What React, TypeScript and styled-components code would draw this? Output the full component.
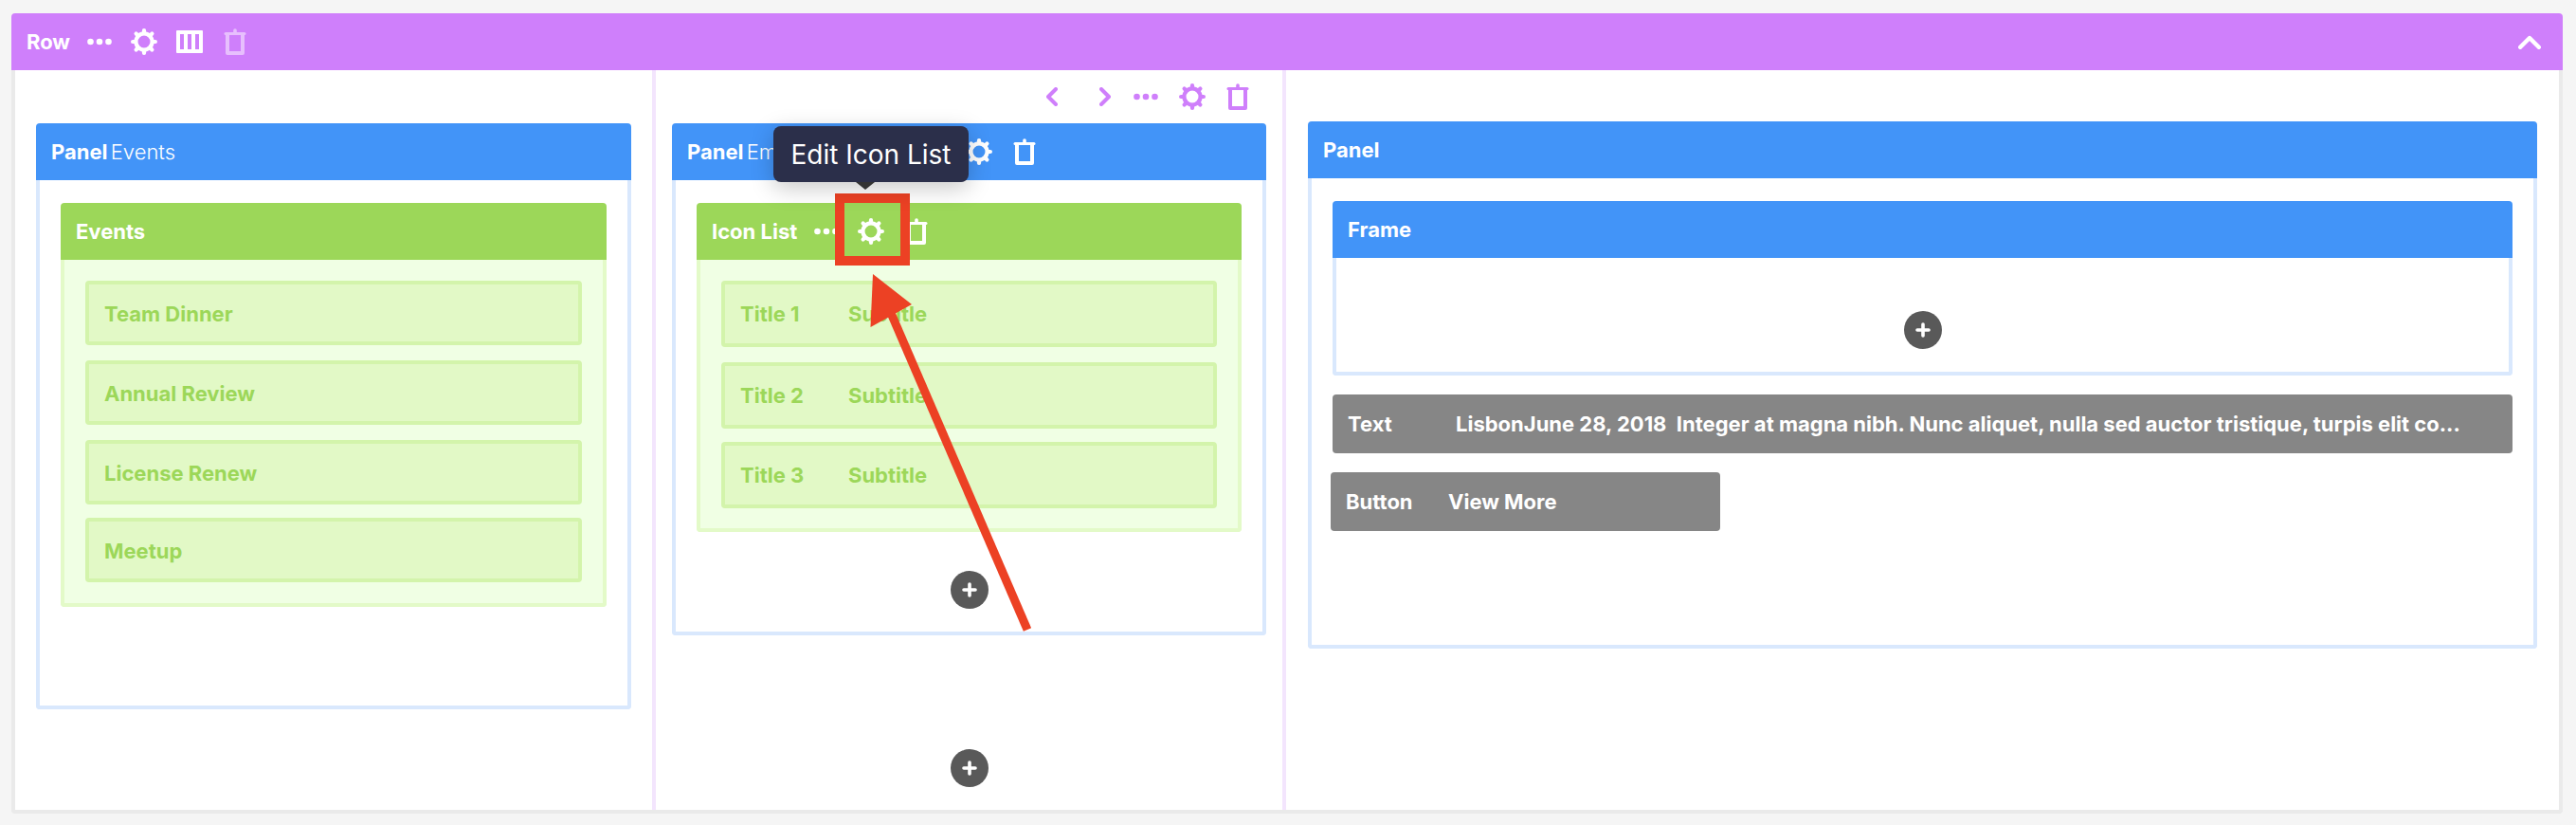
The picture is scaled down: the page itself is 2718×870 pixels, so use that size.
import React from "react";
import styled, { createGlobalStyle } from "styled-components";

const GlobalStyle = createGlobalStyle`
  html, body {
    margin: 0;
    padding: 0;
    background: #f5f5f5;
    font-family: Inter, "Liberation Sans", sans-serif;
  }
  * { box-sizing: border-box; }
`;

const PURPLE = "#cf7ffb";
const BLUE = "#4294f8";
const GREEN = "#9cd759";
const GRAY = "#868686";

// ---- page and row

const Page = styled.div`
  position: relative;
  width: 2718px;
  height: 870px;
  padding: 14px 14px 12px 12px;
  overflow: hidden;
`;

const Row = styled.section`
  display: flex;
  flex-direction: column;
  height: 844px;
`;

const RowBar = styled.header`
  display: flex;
  align-items: center;
  flex: 0 0 60px;
  gap: 20px;
  padding: 0 23px 0 16px;
  background: ${PURPLE};
  color: #fff;
  border-radius: 4px 4px 0 0;
`;

const RowBody = styled.div`
  flex: 1;
  display: flex;
  min-height: 0;
  background: #fff;
  border: 4px solid #eaeaea;
  border-top: 0;
  border-radius: 0 0 4px 4px;
`;

const Column = styled.div<{ $width?: number; $top: number; $side: string }>`
  position: relative;
  display: flex;
  flex-direction: column;
  align-items: stretch;
  ${(p) => (p.$width ? `flex: 0 0 ${p.$width}px;` : "flex: 1; min-width: 0;")}
  padding: ${(p) => p.$top}px ${(p) => p.$side};
  padding-bottom: 0;
  ${(p) => (p.$width ? "border-right: 4px solid #f3e5fd;" : "")}
`;

const ColumnControls = styled.div`
  display: flex;
  align-items: center;
  justify-content: flex-end;
  height: 28px;
  margin-bottom: 14px;
  padding-right: 18px;
  gap: 22px;
  color: ${PURPLE};
`;

// ---- panels and nested blocks

const Block = styled.div<{ $height?: number }>`
  display: flex;
  flex-direction: column;
  ${(p) => (p.$height ? `height: ${p.$height}px;` : "")}
`;

const BlockHeader = styled.div<{ $tone: string }>`
  display: flex;
  align-items: center;
  flex: 0 0 60px;
  gap: 20px;
  padding: 0 0 0 16px;
  background: ${(p) => p.$tone};
  color: #fff;
  border-radius: 4px 4px 0 0;
`;

const BlockBody = styled.div<{ $frame: string; $fill?: string; $pad: string }>`
  flex: 1;
  display: flex;
  flex-direction: column;
  padding: ${(p) => p.$pad};
  background: ${(p) => p.$fill || "#fff"};
  border: 4px solid ${(p) => p.$frame};
  border-top: 0;
  border-radius: 0 0 4px 4px;
`;

const Title = styled.span`
  font-size: 22px;
  font-weight: 700;
  line-height: 1;
  white-space: nowrap;
`;

const TitleNote = styled.span`
  margin-left: -2px;
  font-weight: 300;
`;

const WideTitle = styled(Title)`
  width: 274px;
`;

const ListItem = styled.div<{ $height: number; $pull?: boolean; $drop?: number }>`
  display: flex;
  align-items: center;
  height: ${(p) => p.$height}px;
  margin-top: ${(p) => (p.$pull ? 14 : 16)}px;
  padding-left: 16px;
  padding-top: ${(p) => p.$drop || 0}px;
  background: #e2f9c6;
  border: 4px solid #d3f4ab;
  border-radius: 4px;
  color: ${GREEN};
  font-size: 22px;
  font-weight: 700;
  &:first-child { margin-top: 0; }
`;

const ItemTitle = styled.span`
  width: 114px;
`;

const GrayBar = styled.div<{ $shift?: number; $width?: number }>`
  display: flex;
  align-items: center;
  height: 62px;
  margin-top: 20px;
  margin-left: ${(p) => p.$shift || 0}px;
  padding-left: 16px;
  ${(p) => (p.$width ? `width: ${p.$width}px;` : "")}
  background: ${GRAY};
  border-radius: 4px;
  color: #fff;
  font-size: 22px;
  font-weight: 700;
  white-space: pre;
`;

const BarLabel = styled.span<{ $width: number }>`
  flex: 0 0 ${(p) => p.$width}px;
`;

const AddRow = styled.div<{ $top: number }>`
  display: flex;
  justify-content: center;
  margin-top: ${(p) => p.$top}px;
`;

const AddButton = styled.button`
  display: flex;
  align-items: center;
  justify-content: center;
  width: 40px;
  height: 40px;
  padding: 0;
  border: 0;
  border-radius: 50%;
  background: #595959;
  color: #fff;
`;

// ---- tooltip and the red annotation on top

const Tooltip = styled.div`
  position: absolute;
  left: 816px;
  top: 133px;
  width: 206px;
  height: 59px;
  display: flex;
  align-items: center;
  justify-content: center;
  background: #2b2f4a;
  border-radius: 8px;
  color: #fff;
  font-size: 28px;
  font-weight: 400;
  box-shadow: 0 6px 24px rgba(0, 0, 0, 0.22);
  &::after {
    content: "";
    position: absolute;
    left: 87px;
    top: 59px;
    border: 10px solid transparent;
    border-top: 8px solid #333;
    border-bottom: 0;
  }
`;

const Highlight = styled.div`
  position: absolute;
  left: 881px;
  top: 204px;
  width: 79px;
  height: 76px;
  border: 10px solid #ec4124;
`;

const ArrowLayer = styled.svg`
  position: absolute;
  left: 0;
  top: 0;
  pointer-events: none;
`;

// ---- icons

const DotsSvg = styled.svg<{ $shift: number }>`
  margin-left: ${(p) => p.$shift}px;
`;

const Dots = ({ shift = -2 }: { shift?: number }) => (
  <DotsSvg $shift={shift} width="26" height="8" viewBox="0 0 26 8" fill="currentColor">
    <circle cx="3.5" cy="4" r="3.3" />
    <circle cx="13" cy="4" r="3.3" />
    <circle cx="22.5" cy="4" r="3.3" />
  </DotsSvg>
);

const Gear = () => (
  <svg width="28" height="28" viewBox="0 0 28 28" fill="none" stroke="currentColor">
    <circle cx="14" cy="14" r="8.6" strokeWidth="4.2" />
    <g strokeWidth="4.2" strokeLinecap="round">
      <path d="M14 2.1v3" />
      <path d="M14 22.9v3" />
      <path d="M2.1 14h3" />
      <path d="M22.9 14h3" />
      <path d="M5.6 5.6l2 2" />
      <path d="M20.4 20.4l2 2" />
      <path d="M5.6 22.4l2-2" />
      <path d="M20.4 7.6l2-2" />
    </g>
  </svg>
);

const TrashSvg = styled.svg<{ $shift: number }>`
  margin-left: ${(p) => p.$shift}px;
`;

const Trash = ({ faded, shift = 2 }: { faded?: boolean; shift?: number }) => (
  <TrashSvg
    $shift={shift}
    width="24"
    height="28"
    viewBox="0 0 24 28"
    fill="none"
    stroke="currentColor"
    opacity={faded ? 0.5 : 1}
  >
    <path d="M4 6v20h16V6" strokeWidth="4" strokeLinejoin="round" />
    <path d="M2 5.5h20" strokeWidth="3" strokeLinecap="round" />
    <path d="M12 2v3" strokeWidth="3.6" strokeLinecap="round" />
  </TrashSvg>
);

const Columns = () => (
  <svg width="28" height="24" viewBox="0 0 28 24" fill="currentColor">
    <path
      fillRule="evenodd"
      d="M1 0h26a1 1 0 0 1 1 1v22a1 1 0 0 1-1 1H1a1 1 0 0 1-1-1V1a1 1 0 0 1 1-1zM4 4v16h4V4zM12 4v16h4V4zM20 4v16h4V4z"
    />
  </svg>
);

const Chevron = ({ dir }: { dir: "left" | "right" | "up" }) => {
  if (dir === "up") {
    return (
      <svg width="24" height="15" viewBox="0 0 24 15" fill="none" stroke="currentColor" strokeWidth="4.4" strokeLinecap="round" strokeLinejoin="round">
        <path d="M2.2 12.8L12 3l9.8 9.8" />
      </svg>
    );
  }
  return (
    <svg width="12" height="20" viewBox="0 0 12 20" fill="none" stroke="currentColor" strokeWidth="4" strokeLinecap="round" strokeLinejoin="round">
      <path d={dir === "left" ? "M10 2L2 10l8 8" : "M2 2l8 8-8 8"} />
    </svg>
  );
};

const Plus = () => (
  <svg width="16" height="16" viewBox="0 0 16 16" fill="none" stroke="currentColor" strokeWidth="3.6" strokeLinecap="round">
    <path d="M8 2v12" />
    <path d="M2 8h12" />
  </svg>
);

const Push = styled.span`
  margin-left: auto;
  display: flex;
`;

const events = ["Team Dinner", "Annual Review", "License Renew", "Meetup"];
const titles = ["Title 1", "Title 2", "Title 3"];

const App = () => {
  return (
    <Page>
      <GlobalStyle />
      <Row>
        <RowBar>
          <Title>Row</Title>
          <Dots />
          <Gear />
          <Columns />
          <Trash faded />
          <Push>
            <Chevron dir="up" />
          </Push>
        </RowBar>
        <RowBody>
          <Column $width={676} $top={56} $side="22px 0 22px">
            <Block $height={618}>
              <BlockHeader $tone={BLUE}>
                <Title>
                  Panel <TitleNote>Events</TitleNote>
                </Title>
              </BlockHeader>
              <BlockBody $frame="#d9e8fd" $pad="24px 22px 0">
                <Block>
                  <BlockHeader $tone={GREEN}>
                    <Title>Events</Title>
                  </BlockHeader>
                  <BlockBody $frame="#e3fac8" $fill="#f0ffe4" $pad="22px 22px 22px">
                    {events.map((name, i) => (
                      <ListItem key={name} $height={68} $drop={2} $pull={i === 3}>
                        {name}
                      </ListItem>
                    ))}
                  </BlockBody>
                </Block>
              </BlockBody>
            </Block>
          </Column>

          <Column $width={665} $top={14} $side="17px 0 17px">
            <ColumnControls>
              <Chevron dir="left" />
              <span />
              <Chevron dir="right" />
              <Dots shift={2} />
              <Gear />
              <Trash shift={0} />
            </ColumnControls>
            <Block $height={540}>
              <BlockHeader $tone={BLUE}>
                <WideTitle>
                  Panel <TitleNote>Empty</TitleNote>
                </WideTitle>
                <Gear />
                <Trash />
              </BlockHeader>
              <BlockBody $frame="#d9e8fd" $pad="24px 22px 0">
                <Block>
                  <BlockHeader $tone={GREEN}>
                    <Title>Icon List</Title>
                    <Dots />
                    <Gear />
                    <Trash />
                  </BlockHeader>
                  <BlockBody $frame="#e3fac8" $fill="#f0ffe4" $pad="22px 22px 21px">
                    {titles.map((name, i) => (
                      <ListItem key={name} $height={70} $pull={i === 2}>
                        <ItemTitle>{name}</ItemTitle>
                        Subtitle
                      </ListItem>
                    ))}
                  </BlockBody>
                </Block>
                <AddRow $top={41}>
                  <AddButton>
                    <Plus />
                  </AddButton>
                </AddRow>
              </BlockBody>
            </Block>
            <AddRow $top={120}>
              <AddButton>
                <Plus />
              </AddButton>
            </AddRow>
          </Column>

          <Column $top={54} $side="23px 22px">
            <Block $height={556}>
              <BlockHeader $tone={BLUE}>
                <Title>Panel</Title>
              </BlockHeader>
              <BlockBody $frame="#d9e8fd" $pad="24px 22px 0">
                <Block $height={184}>
                  <BlockHeader $tone={BLUE}>
                    <Title>Frame</Title>
                  </BlockHeader>
                  <BlockBody $frame="#d9e8fd" $pad="0">
                    <AddRow $top={56}>
                      <AddButton>
                        <Plus />
                      </AddButton>
                    </AddRow>
                  </BlockBody>
                </Block>
                <GrayBar>
                  <BarLabel $width={114}>Text</BarLabel>
                  {"LisbonJune 28, 2018  Integer at magna nibh. Nunc aliquet, nulla sed auctor tristique, turpis elit co..."}
                </GrayBar>
                <GrayBar $shift={-2} $width={411}>
                  <BarLabel $width={108}>Button</BarLabel>
                  View More
                </GrayBar>
              </BlockBody>
            </Block>
          </Column>
        </RowBody>
      </Row>

      <Highlight />
      <Tooltip>Edit Icon List</Tooltip>
      <ArrowLayer width="2718" height="870" viewBox="0 0 2718 870">
        <path d="M1084 664L940 330" stroke="#ec4124" strokeWidth="9" fill="none" />
        <path d="M921 289L918.5 345L962 321Z" fill="#ec4124" />
      </ArrowLayer>
    </Page>
  );
};

export default App;
